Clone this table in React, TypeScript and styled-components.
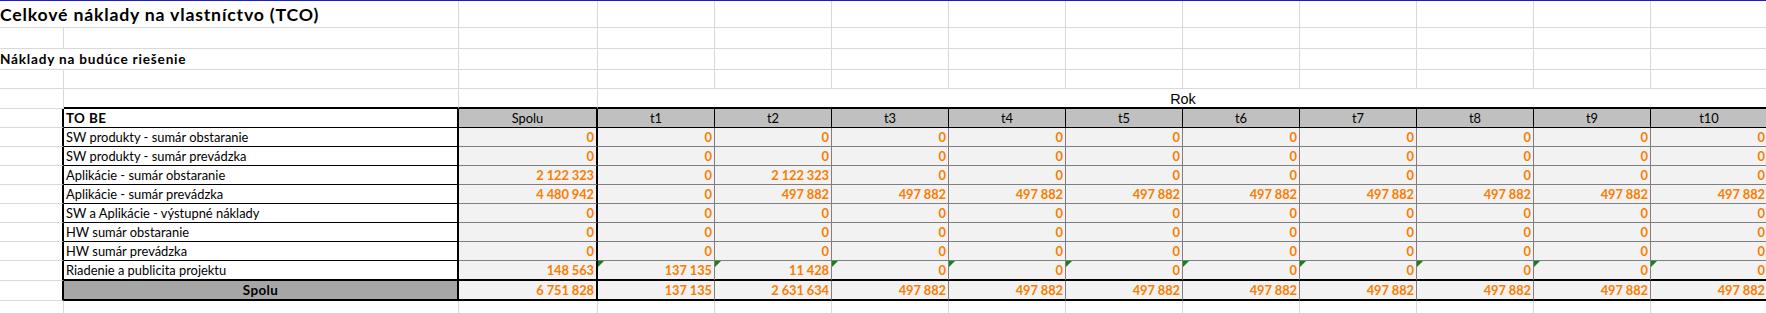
import styled, { createGlobalStyle } from "styled-components";

const GRID = "#d9d9d9";
const BLACK = "#000000";
const CALC = "#7f7f7f";
const ORANGE = "#fa7d00";

const COLS = [64, 395, 139, 117, 117, 117, 117, 117, 117, 117, 117, 117, 117];
const YEARS = ["t1", "t2", "t3", "t4", "t5", "t6", "t7", "t8", "t9", "t10"];

const GlobalStyle = createGlobalStyle`
	html, body {
		margin: 0;
		padding: 0;
		background: #ffffff;
		overflow: hidden;
	}
	body {
		font-family: Lato, "Open Sans", sans-serif;
		color: #000000;
	}
`;

const Sheet = styled.div`
	width: 1768px;
	border-top: 1px solid #1c1cd6;
	display: flex;
	flex-direction: column;
`;

const Row = styled.div<{ $h: number }>`
	display: flex;
	height: ${(p) => p.$h}px;
`;

const Cell = styled.div<{
	$w: number;
	$right?: string;
	$bottom?: string;
	$bg?: string;
	$align?: "flex-start" | "center" | "flex-end";
}>`
	position: relative;
	box-sizing: border-box;
	flex: none;
	width: ${(p) => p.$w}px;
	height: 100%;
	padding: 0 2px;
	border-right: ${(p) => p.$right ?? "none"};
	border-bottom: ${(p) => p.$bottom ?? "none"};
	background: ${(p) => p.$bg ?? "transparent"};
	display: flex;
	align-items: flex-end;
	justify-content: ${(p) => p.$align ?? "flex-start"};
	white-space: nowrap;
`;

const Title = styled.span`
	font-size: 17.7px;
	font-weight: 700;
	line-height: 25px;
	letter-spacing: 0.8px;
	margin-left: -1px;
`;

const Subtitle = styled.span`
	font-size: 13.6px;
	font-weight: 700;
	line-height: 20px;
	letter-spacing: 0.8px;
	margin-left: -1px;
`;

const Text = styled.span<{ $bold?: boolean }>`
	font-size: ${(p) => (p.$bold ? 13.4 : 12.9)}px;
	font-weight: ${(p) => (p.$bold ? 700 : 400)};
	letter-spacing: ${(p) => (p.$bold ? 0.4 : 0)}px;
	line-height: 18px;
`;

const Value = styled.span`
	font-size: 12.9px;
	font-weight: 700;
	line-height: 18px;
	color: ${ORANGE};
	letter-spacing: -0.1px;
`;

const YearCaption = styled.span`
	font-family: "Liberation Sans", Arial, sans-serif;
	font-size: 14.4px;
	line-height: 16px;
`;

const ErrorMark = styled.span`
	position: absolute;
	left: 0;
	top: 0;
	width: 0;
	height: 0;
	border-top: 6px solid #16801b;
	border-right: 6px solid transparent;
`;

const thin = (c: string) => `1px solid ${c}`;
const thick = `2px solid ${BLACK}`;

type Line = {
	label: string;
	total: string;
	years: string[];
};

const repeat = (v: string, n: number) => Array.from({ length: n }, () => v);

const lines: Line[] = [
	{ label: "SW produkty - sumár obstaranie", total: "0", years: repeat("0", 10) },
	{ label: "SW produkty - sumár prevádzka", total: "0", years: repeat("0", 10) },
	{
		label: "Aplikácie - sumár obstaranie",
		total: "2 122 323",
		years: ["0", "2 122 323", ...repeat("0", 8)],
	},
	{
		label: "Aplikácie - sumár prevádzka",
		total: "4 480 942",
		years: ["0", ...repeat("497 882", 9)],
	},
	{ label: "SW a Aplikácie - výstupné náklady", total: "0", years: repeat("0", 10) },
	{ label: "HW sumár obstaranie", total: "0", years: repeat("0", 10) },
	{ label: "HW sumár prevádzka", total: "0", years: repeat("0", 10) },
	{
		label: "Riadenie a publicita projektu",
		total: "148 563",
		years: ["137 135", "11 428", ...repeat("0", 8)],
	},
];

const totals: Line = {
	label: "Spolu",
	total: "6 751 828",
	years: ["137 135", "2 631 634", ...repeat("497 882", 8)],
};

function BlankRow({ h, last }: { h: number; last?: boolean }) {
	return (
		<Row $h={h}>
			{COLS.map((w, i) => (
				<Cell key={`blank_${i}`} $w={w} $right={thin(GRID)} $bottom={last ? undefined : thin(GRID)} />
			))}
		</Row>
	);
}

function TextRow({ h, children }: { h: number; children: React.ReactNode }) {
	return (
		<Row $h={h}>
			<Cell $w={COLS[0]} $bottom={thin(GRID)} style={{ paddingLeft: 1 }}>
				{children}
			</Cell>
			{COLS.slice(1).map((w, i) => (
				<Cell key={`text_${i}`} $w={w} $right={thin(GRID)} $bottom={thin(GRID)} />
			))}
		</Row>
	);
}

function DataRow({ line, h, lastData }: { line: Line; h: number; lastData?: boolean }) {
	const bottom = lastData ? thick : thin(BLACK);
	const calcBottom = lastData ? thick : thin(CALC);
	return (
		<Row $h={h}>
			<Cell $w={COLS[0]} $right={thick} $bottom={thin(GRID)} />
			<Cell $w={COLS[1]} $right={thick} $bottom={bottom} $bg="#ffffff">
				<Text>{line.label}</Text>
			</Cell>
			<Cell $w={COLS[2]} $right={thick} $bottom={calcBottom} $bg="#f2f2f2" $align="flex-end">
				<Value>{line.total}</Value>
			</Cell>
			{line.years.map((v, i) => (
				<Cell
					key={`y_${i}`}
					$w={COLS[3 + i]}
					$right={thin(CALC)}
					$bottom={calcBottom}
					$bg="#f2f2f2"
					$align="flex-end"
				>
					{lastData && <ErrorMark />}
					<Value>{v}</Value>
				</Cell>
			))}
		</Row>
	);
}

export default function App() {
	const yearsWidth = COLS.slice(3).reduce((a, b) => a + b, 0);

	return (
		<>
			<GlobalStyle />
			<Sheet>
				<TextRow h={27}>
					<Title>Celkové náklady na vlastníctvo (TCO)</Title>
				</TextRow>
				<BlankRow h={21} />
				<TextRow h={21}>
					<Subtitle>Náklady na budúce riešenie</Subtitle>
				</TextRow>
				<BlankRow h={19} />

				<Row $h={20}>
					<Cell $w={COLS[0]} $right={thin(GRID)} $bottom={thin(GRID)} />
					<Cell $w={COLS[1]} $right={thin(GRID)} $bottom={thick} />
					<Cell $w={COLS[2]} $right={thin(GRID)} $bottom={thick} />
					<Cell $w={yearsWidth} $bottom={thick} $align="center">
						<YearCaption>Rok</YearCaption>
					</Cell>
				</Row>

				<Row $h={19}>
					<Cell $w={COLS[0]} $right={thick} $bottom={thin(GRID)} />
					<Cell $w={COLS[1]} $right={thick} $bottom={thin(BLACK)} $bg="#ffffff">
						<Text $bold>TO BE</Text>
					</Cell>
					<Cell $w={COLS[2]} $right={thick} $bottom={thin(BLACK)} $bg="#c0c0c0" $align="center">
						<Text>Spolu</Text>
					</Cell>
					{YEARS.map((y, i) => (
						<Cell
							key={y}
							$w={COLS[3 + i]}
							$right={thin(BLACK)}
							$bottom={thin(BLACK)}
							$bg="#c0c0c0"
							$align="center"
						>
							<Text>{y}</Text>
						</Cell>
					))}
				</Row>

				{lines.map((line, i) => (
					<DataRow
						key={`line_${i}`}
						line={line}
						h={i === lines.length - 1 ? 20 : 19}
						lastData={i === lines.length - 1}
					/>
				))}

				<Row $h={20}>
					<Cell $w={COLS[0]} $right={thick} $bottom={thin(GRID)} />
					<Cell $w={COLS[1]} $right={thick} $bottom={thick} $bg="#a6a6a6" $align="center">
						<Text $bold>{totals.label}</Text>
					</Cell>
					<Cell $w={COLS[2]} $right={thick} $bottom={thick} $bg="#f2f2f2" $align="flex-end">
						<Value>{totals.total}</Value>
					</Cell>
					{totals.years.map((v, i) => (
						<Cell
							key={`sum_${i}`}
							$w={COLS[3 + i]}
							$right={thin(CALC)}
							$bottom={thick}
							$bg="#f2f2f2"
							$align="flex-end"
						>
							<Value>{v}</Value>
						</Cell>
					))}
				</Row>

				<BlankRow h={20} last />
			</Sheet>
		</>
	);
}
